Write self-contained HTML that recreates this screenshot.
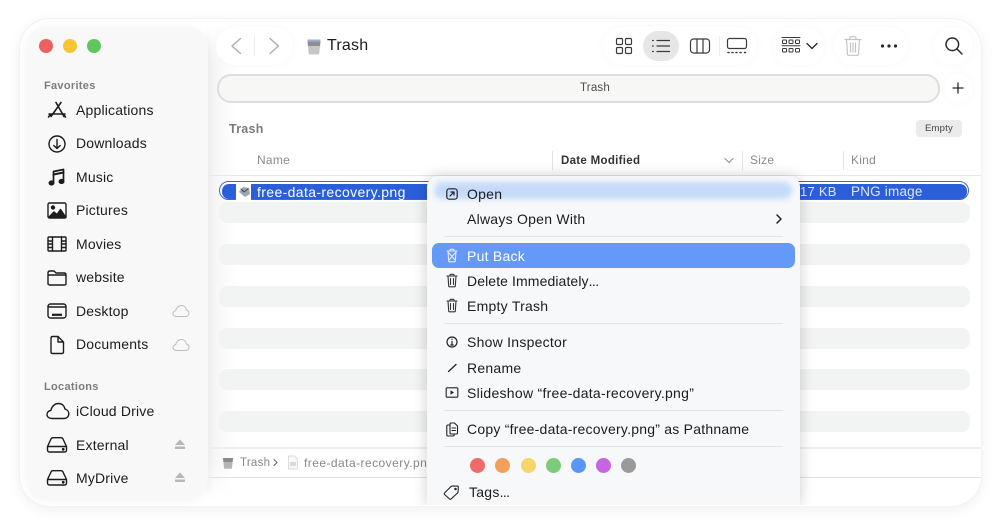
<!DOCTYPE html>
<html>
<head>
<meta charset="utf-8">
<style>
html,body{margin:0;padding:0;background:#fff;}
body{width:1000px;height:525px;position:relative;overflow:hidden;font-family:"Liberation Sans",sans-serif;color:#1c1c1c;}
div,span,svg{position:absolute;}
b.e{position:static;font-weight:normal;letter-spacing:-.6px;}
.t{white-space:nowrap;font-size:14px;line-height:18px;letter-spacing:.25px;}
.s{left:76px;letter-spacing:.18px;}
.h{left:44px;font-size:11px;font-weight:bold;color:#7c7c7c;letter-spacing:.3px;}
.m{left:467px;}
.st{left:219px;width:751px;height:21px;background:#f2f3f3;border-radius:8px;}
.pill{background:#fff;border-radius:19px;box-shadow:0 0 10px rgba(0,0,0,.03);}
.sep{left:444px;width:339px;height:1px;background:#e2e3e4;}
.dot{width:15px;height:15px;border-radius:50%;top:458px;}
svg{fill:none;stroke:#1c1c1c;stroke-width:1.4;stroke-linecap:round;stroke-linejoin:round;}
</style>
</head>
<body>
<div style="left:20px;top:19px;width:961px;height:487px;border-radius:30px;background:#fff;box-shadow:0 0 0 1px #f3f3f3,0 3px 14px rgba(0,0,0,.07);"></div>
<div style="left:206px;top:24px;width:30px;height:476px;background:linear-gradient(90deg,#f2f2f2,#fff);-webkit-mask-image:linear-gradient(180deg,transparent 0,#000 40px,#000 436px,transparent 100%);mask-image:linear-gradient(180deg,transparent 0,#000 40px,#000 436px,transparent 100%);"></div>

<!-- Sidebar -->
<div style="left:27px;top:27px;width:181px;height:471px;border-radius:19px;background:#f8f8f8;box-shadow:0 2px 10px rgba(0,0,0,.05);"></div>
<div style="left:39px;top:39px;width:14px;height:14px;border-radius:50%;background:#ee5f5f;"></div>
<div style="left:63px;top:39px;width:14px;height:14px;border-radius:50%;background:#f6c531;"></div>
<div style="left:87px;top:39px;width:14px;height:14px;border-radius:50%;background:#5fc75e;"></div>

<div class="t h" style="top:77px;">Favorites</div>
<div class="t s" style="top:101px;">Applications</div>
<div class="t s" style="top:134px;">Downloads</div>
<div class="t s" style="top:168px;">Music</div>
<div class="t s" style="top:201px;">Pictures</div>
<div class="t s" style="top:235px;">Movies</div>
<div class="t s" style="top:268px;">website</div>
<div class="t s" style="top:302px;">Desktop</div>
<div class="t s" style="top:335px;">Documents</div>
<div class="t h" style="top:378px;">Locations</div>
<div class="t s" style="top:402px;">iCloud Drive</div>
<div class="t s" style="top:436px;">External</div>
<div class="t s" style="top:469px;">MyDrive</div>

<!-- sidebar icons -->
<svg style="left:46px;top:100px;" width="22" height="20" viewBox="0 0 22 20"><path d="M10 2.500L18 16.500M15 2.500L5 16.500M3 14h16M2.500 17l2-2.500M19.500 17l-2-2.500" stroke-width="1.600"/></svg>
<svg style="left:47px;top:134px;" width="20" height="20" viewBox="0 0 20 20"><circle cx="10" cy="10" r="8"/><path d="M10 5.500v9M6.800 11.500l3.200 3 3.200-3"/></svg>
<svg style="left:47px;top:167px;" width="20" height="20" viewBox="0 0 20 20"><path d="M6.500 16V4.500L16.500 2.500V14" stroke-width="1.700"/><path d="M6.500 7.500l10-2" stroke-width="2"/><ellipse cx="4.500" cy="16" rx="2.300" ry="1.900" fill="#1c1c1c"/><ellipse cx="14.500" cy="14.500" rx="2.300" ry="1.900" fill="#1c1c1c"/></svg>
<svg style="left:47px;top:202px;" width="20" height="18" viewBox="0 0 20 18"><rect x="1" y="1" width="18" height="15" rx="1.500"/><circle cx="6" cy="5.500" r="1.500" fill="#1c1c1c"/><path d="M1.500 15.500L7 10l3 2.500 3.500-5 5.500 8z" fill="#1c1c1c"/></svg>
<svg style="left:47px;top:235px;" width="20" height="18" viewBox="0 0 20 18"><rect x="1" y="2" width="18" height="14" rx="1"/><path d="M5.500 2v14M14.500 2v14M1 6h4.500M1 9h4.500M1 12.500h4.500M14.500 6H19M14.500 9H19M14.500 12.500H19"/></svg>
<svg style="left:47px;top:269px;" width="20" height="18" viewBox="0 0 20 18"><path d="M1 4c0-1 .6-2 2-2h4l2 2h8c1.300 0 2 .8 2 2v8.500c0 1-.7 1.500-1.700 1.500H2.700C1.700 16 1 15.500 1 14.500zM1 6h18"/></svg>
<svg style="left:47px;top:302px;" width="20" height="18" viewBox="0 0 20 18"><rect x="1" y="2" width="18" height="14" rx="2.500"/><path d="M1.500 5h17"/><path d="M5 12.800h10" stroke-width="2.200" stroke-linecap="butt"/></svg>
<svg style="left:49px;top:335px;" width="16" height="20" viewBox="0 0 16 20"><path d="M2 3c0-1 .6-1.500 1.500-1.500H9L14.500 7v10c0 1-.6 1.500-1.500 1.500H3.500C2.600 18.500 2 18 2 17zM9 1.500V7h5.500"/></svg>
<svg style="left:172px;top:304px;stroke:#bdbdbd;stroke-width:1;" width="18" height="14" viewBox="0 0 18 14"><path d="M4.500 12.500C2.500 12.500 1 11.200 1 9.500c0-1.500 1.200-2.700 2.700-2.800C4.300 3.800 6.500 1.500 9.500 1.500c2.800 0 4.500 2 4.800 4.500 1.500.4 2.700 1.700 2.700 3.300 0 1.800-1.300 3.200-3 3.200z"/></svg>
<svg style="left:172px;top:338px;stroke:#bdbdbd;stroke-width:1;" width="18" height="14" viewBox="0 0 18 14"><path d="M4.500 12.500C2.500 12.500 1 11.200 1 9.500c0-1.500 1.200-2.700 2.700-2.800C4.300 3.800 6.500 1.500 9.500 1.500c2.800 0 4.500 2 4.800 4.500 1.500.4 2.700 1.700 2.700 3.300 0 1.800-1.300 3.200-3 3.200z"/></svg>
<svg style="left:46px;top:402px;" width="24" height="18" viewBox="0 0 24 18"><path d="M6 16.500C3 16.500 1 14.800 1 12.500c0-2.200 1.700-3.900 3.900-4C5.700 4.300 8.800 1.500 12.500 1.500c3.700 0 6 2.600 6.500 5.600 2.200.5 3.800 2.400 3.800 4.700 0 2.700-2 4.700-4.800 4.700z"/></svg>
<svg style="left:46px;top:436px;" width="22" height="18" viewBox="0 0 22 18"><path d="M1.500 10.500L5 3c.4-.9 1-1.300 2-1.300h8c1 0 1.600.4 2 1.300l3.500 7.500M1.500 10.500h19v3.500c0 1.300-.9 2-2 2h-15c-1.100 0-2-.7-2-2z"/><circle cx="17.200" cy="13.300" r=".7" fill="#1c1c1c"/></svg>
<svg style="left:46px;top:469px;" width="22" height="18" viewBox="0 0 22 18"><path d="M1.500 10.500L5 3c.4-.9 1-1.300 2-1.300h8c1 0 1.600.4 2 1.300l3.500 7.500M1.500 10.500h19v3.500c0 1.300-.9 2-2 2h-15c-1.100 0-2-.7-2-2z"/><circle cx="17.200" cy="13.300" r=".7" fill="#1c1c1c"/></svg>
<svg style="left:174px;top:439px;stroke:none;" width="12" height="11" viewBox="0 0 12 11"><path d="M6 0.500L11 6H1z" fill="#b8b8b8"/><rect x="1" y="7.500" width="10" height="2.500" fill="#b8b8b8"/></svg>
<svg style="left:174px;top:472px;stroke:none;" width="12" height="11" viewBox="0 0 12 11"><path d="M6 0.500L11 6H1z" fill="#b8b8b8"/><rect x="1" y="7.500" width="10" height="2.500" fill="#b8b8b8"/></svg>

<!-- Toolbar -->
<div class="pill" style="left:216px;top:27px;width:77px;height:38px;"></div>
<svg style="left:228px;top:35px;stroke:#aeaeae;stroke-width:1.500;" width="18" height="22" viewBox="0 0 18 22"><path d="M12.500 3.500L4 11l8.500 7.500"/></svg>
<div style="left:254px;top:36px;width:1px;height:20px;background:#eeeeee;"></div>
<svg style="left:265px;top:35px;stroke:#aeaeae;stroke-width:1.500;" width="18" height="22" viewBox="0 0 18 22"><path d="M5 3.500L13.500 11 5 18.500"/></svg>
<svg style="left:306px;top:38px;stroke:none;" width="16" height="17" viewBox="0 0 16 17"><path d="M1.500 3h13l-1.200 12.500c-.1.700-.5 1-1.200 1H3.900c-.7 0-1.100-.3-1.200-1z" fill="#c6c6c6"/><path d="M1.500 3h13l-.5 5H2z" fill="#8e8e8e"/><rect x="1.500" y="1.500" width="13" height="2.200" fill="#9ab0cc"/></svg>
<div class="t" style="left:327px;top:36px;font-size:16px;line-height:20px;letter-spacing:.2px;">Trash</div>

<div class="pill" style="left:603px;top:27px;width:154px;height:38px;"></div>
<div style="left:643px;top:31px;width:36px;height:30px;border-radius:15px;background:#e6e6e6;"></div>
<svg style="left:615px;top:37px;stroke:#3a3a3a;stroke-width:1.200;" width="18" height="18" viewBox="0 0 18 18"><rect x="1.500" y="1.500" width="6" height="6" rx="1.200"/><rect x="10.500" y="1.500" width="6" height="6" rx="1.200"/><rect x="1.500" y="10.500" width="6" height="6" rx="1.200"/><rect x="10.500" y="10.500" width="6" height="6" rx="1.200"/></svg>
<svg style="left:651px;top:38px;stroke:#3a3a3a;stroke-width:1.200;" width="20" height="16" viewBox="0 0 20 16"><path d="M6 2.500h12.500M6 8h12.500M6 13.500h12.500M1.500 2.500h.8M1.500 8h.8M1.500 13.500h.8"/></svg>
<svg style="left:689px;top:37px;stroke:#3a3a3a;stroke-width:1.200;" width="22" height="18" viewBox="0 0 22 18"><rect x="1.500" y="2" width="19" height="14" rx="3"/><path d="M8 2v14M14 2v14"/></svg>
<div style="left:719px;top:36px;width:1px;height:20px;background:#eeeeee;"></div>
<svg style="left:726px;top:37px;stroke:#3a3a3a;stroke-width:1.200;" width="22" height="18" viewBox="0 0 22 18"><rect x="1.500" y="1.500" width="19" height="10" rx="2"/><path d="M2 15.500h1M6 15.500h1M10 15.500h1M14 15.500h1M18.500 15.500h1" stroke-width="1.500"/></svg>

<div class="pill" style="left:774px;top:27px;width:50px;height:38px;"></div>
<svg style="left:781px;top:36px;stroke:#3a3a3a;stroke-width:1;" width="20" height="20" viewBox="0 0 20 20"><path d="M1 1.500h18M1 9.800h18"/><rect x="1.500" y="4" width="4" height="3.500" rx=".6"/><rect x="8" y="4" width="4" height="3.500" rx=".6"/><rect x="14.500" y="4" width="4" height="3.500" rx=".6"/><rect x="1.500" y="12.500" width="4" height="3.500" rx=".6"/><rect x="8" y="12.500" width="4" height="3.500" rx=".6"/><rect x="14.500" y="12.500" width="4" height="3.500" rx=".6"/></svg>
<svg style="left:805px;top:41px;stroke:#2a2a2a;stroke-width:1.400;" width="14" height="10" viewBox="0 0 14 10"><path d="M2 2.500l5 5 5-5"/></svg>

<div class="pill" style="left:834px;top:27px;width:73px;height:38px;"></div>
<svg style="left:843px;top:35px;stroke:#c4c4c4;stroke-width:1.200;" width="20" height="22" viewBox="0 0 20 22"><path d="M2 4.500h16M7 4.500V3c0-.8.500-1.300 1.300-1.300h3.400c.8 0 1.300.5 1.300 1.300v1.500M3.500 4.500l1 14.500c0 .8.600 1.300 1.300 1.300h8.400c.7 0 1.300-.5 1.300-1.300l1-14.500M7.500 8v9M10 8v9M12.500 8v9"/></svg>
<svg style="left:880px;top:43px;stroke:none;" width="18" height="6" viewBox="0 0 18 6"><circle cx="2.500" cy="3" r="1.600" fill="#2a2a2a"/><circle cx="9" cy="3" r="1.600" fill="#2a2a2a"/><circle cx="15.500" cy="3" r="1.600" fill="#2a2a2a"/></svg>

<div class="pill" style="left:934px;top:27px;width:39px;height:38px;"></div>
<svg style="left:944px;top:36px;stroke:#2a2a2a;stroke-width:1.500;" width="20" height="20" viewBox="0 0 20 20"><circle cx="8.300" cy="8.300" r="6.300"/><path d="M13 13l5 5"/></svg>

<!-- Tab bar -->
<div style="left:217px;top:74px;width:719px;height:25px;border:2px solid #dededc;border-radius:14px;background:#f7f7f5;"></div>
<div class="t" style="left:580px;top:79px;font-size:11.500px;line-height:18px;color:#4d4d4d;letter-spacing:.2px;">Trash</div>
<div class="pill" style="left:944px;top:74px;width:29px;height:29px;border-radius:50%;"></div>
<svg style="left:951px;top:81px;stroke:#2a2a2a;stroke-width:1.300;" width="14" height="14" viewBox="0 0 14 14"><path d="M7 2v10M2 7h10"/></svg>

<!-- Content header -->
<div class="t" style="left:229px;top:120px;font-size:12.500px;font-weight:bold;color:#7b7b7b;letter-spacing:.25px;">Trash</div>
<div style="left:916px;top:120px;width:46px;height:17px;border-radius:4px;background:#ebebeb;"></div>
<div class="t" style="left:925px;top:120px;font-size:9.500px;line-height:17px;color:#444;letter-spacing:.2px;">Empty</div>

<div class="t" style="left:257px;top:151px;font-size:12px;color:#8a8a8a;">Name</div>
<div class="t" style="left:561px;top:152px;font-size:11.500px;font-weight:bold;color:#333;letter-spacing:.3px;">Date Modified</div>
<svg style="left:723px;top:156px;stroke:#8a8a8a;stroke-width:1;" width="12" height="9" viewBox="0 0 12 9"><path d="M2 2.500l4 4 4-4"/></svg>
<div class="t" style="left:750px;top:151px;font-size:12px;color:#8a8a8a;">Size</div>
<div class="t" style="left:851px;top:151px;font-size:12px;color:#8a8a8a;">Kind</div>
<div style="left:552px;top:151px;width:1px;height:19px;background:#e4e4e4;"></div>
<div style="left:742px;top:151px;width:1px;height:19px;background:#e4e4e4;"></div>
<div style="left:843px;top:151px;width:1px;height:19px;background:#e4e4e4;"></div>
<div style="left:209px;top:175px;width:772px;height:1px;background:#e8e8e8;"></div>

<!-- Rows -->
<div class="st" style="top:202px;"></div>
<div class="st" style="top:244px;"></div>
<div class="st" style="top:286px;"></div>
<div class="st" style="top:328px;"></div>
<div class="st" style="top:369px;"></div>
<div class="st" style="top:411px;"></div>

<!-- Selected row -->
<div style="left:219px;top:181px;width:748px;height:17px;border:1.500px solid #3d68d8;border-radius:10px;background:#fff;"></div>
<div style="left:222px;top:184px;width:745px;height:15px;border-radius:7px;background:#2b5fd9;"></div>
<div style="left:236px;top:183px;width:15px;height:17px;background:#fff;"></div>
<svg style="left:237px;top:184px;stroke:none;" width="15" height="15" viewBox="0 0 15 15"><path d="M2 8l4-5 6 1 1 6-5 3z" fill="#9aa6b8"/><path d="M4 5l3 3 4-3" stroke="#444" stroke-width="1"/></svg>
<div class="t" style="left:257px;top:183px;color:#fff;font-size:14px;letter-spacing:.37px;">free-data-recovery.png</div>
<div class="t" style="left:800px;top:183px;color:#dfe7fb;font-size:13px;">17 KB</div>
<div class="t" style="left:851px;top:183px;color:#dfe7fb;font-size:13.500px;letter-spacing:.2px;">PNG image</div>

<!-- Status bar -->
<div style="left:209px;top:447px;width:772px;height:2px;background:#eeeeee;"></div>
<div style="left:209px;top:477px;width:772px;height:1px;background:#e2e2e2;"></div>
<svg style="left:222px;top:456px;stroke:none;" width="12" height="13" viewBox="0 0 12 13"><path d="M1 2h10l-1 10c0 .5-.4.8-.9.8H2.900c-.5 0-.9-.3-.9-.8z" fill="#b5b5b5"/><path d="M1 2h10l-.4 4H1.400z" fill="#8a8a8a"/></svg>
<div class="t" style="left:240px;top:454px;font-size:11.500px;color:#888;">Trash</div>
<svg style="left:272px;top:458px;stroke:#666;stroke-width:1;" width="7" height="9" viewBox="0 0 7 9"><path d="M2 1.500l3 3-3 3"/></svg>
<svg style="left:287px;top:455px;stroke:#dcdcdc;stroke-width:1;" width="12" height="15" viewBox="0 0 12 15"><path d="M1.500 1h6l3 3v10h-9z" fill="#f8f8f8"/><path d="M3.500 8h5M3.500 10h5" stroke="#bbb"/></svg>
<div class="t" style="left:304px;top:454px;font-size:12px;color:#888;width:123px;overflow:hidden;letter-spacing:.45px;">free-data-recovery.png</div>

<!-- Context menu -->
<div style="left:427px;top:176px;width:373px;height:329px;border-radius:11px 11px 0 0;background:#f7f8fa;box-shadow:0 0 14px rgba(0,0,0,.2);clip-path:inset(-30px -30px 0 -30px);"></div>
<div style="left:434px;top:182px;width:358px;height:17px;border-radius:9px;background:#c3daf9;filter:blur(3px);"></div>

<svg style="left:445px;top:187px;stroke:#222;stroke-width:1.200;" width="14" height="14" viewBox="0 0 14 14"><rect x="1.800" y="1.800" width="10.400" height="10.400" rx="2.500"/><path d="M5 9l4-4M6 5h3v3"/></svg>
<div class="t m" style="top:185px;">Open</div>
<div class="t m" style="top:210px;">Always Open With</div>
<svg style="left:774px;top:213px;stroke:#222;stroke-width:1.500;" width="10" height="12" viewBox="0 0 10 12"><path d="M3 2l4 4-4 4"/></svg>
<div class="sep" style="top:236px;"></div>

<div style="left:432px;top:243px;width:363px;height:25px;border-radius:7px;background:#6499f8;"></div>
<svg style="left:445px;top:248px;stroke:#e4edfe;stroke-width:1.100;" width="14" height="15" viewBox="0 0 14 15"><path d="M2 3h10M5 3V2c0-.4.300-.7.700-.7h2.600c.4 0 .7.3.7.7v1M3 3l.7 10c0 .5.400.8.800.8h5c.4 0 .8-.3.800-.8L11 3M4 5l6 7M10 5l-6 7"/></svg>
<div class="t m" style="top:247px;color:#fff;">Put Back</div>
<svg style="left:445px;top:273px;stroke:#333;stroke-width:1.100;" width="14" height="15" viewBox="0 0 14 15"><path d="M2 3h10M5 3V2c0-.4.300-.7.700-.7h2.600c.4 0 .7.3.7.7v1M3 3l.7 10c0 .5.400.8.800.8h5c.4 0 .8-.3.800-.8L11 3M5.500 5.500v6M8.500 5.500v6"/></svg>
<div class="t m" style="top:272px;letter-spacing:.1px;">Delete Immediately<b class="e">...</b></div>
<svg style="left:445px;top:298px;stroke:#333;stroke-width:1.100;" width="14" height="15" viewBox="0 0 14 15"><path d="M2 3h10M5 3V2c0-.4.300-.7.700-.7h2.600c.4 0 .7.3.7.7v1M3 3l.7 10c0 .5.400.8.800.8h5c.4 0 .8-.3.800-.8L11 3M5.500 5.500v6M8.500 5.500v6"/></svg>
<div class="t m" style="top:297px;">Empty Trash</div>
<div class="sep" style="top:323px;"></div>

<svg style="left:445px;top:335px;stroke:#222;stroke-width:1.200;" width="14" height="14" viewBox="0 0 14 14"><circle cx="7" cy="7" r="5"/><path d="M7 6.500V10M5.800 10h2.400M7 4.200v.3"/></svg>
<div class="t m" style="top:333px;">Show Inspector</div>
<svg style="left:446px;top:361px;stroke:#222;stroke-width:1.300;" width="13" height="13" viewBox="0 0 13 13"><path d="M2.500 10.500l7.500-7"/></svg>
<div class="t m" style="top:359px;">Rename</div>
<svg style="left:445px;top:386px;stroke:#222;stroke-width:1.100;" width="14" height="13" viewBox="0 0 14 13"><rect x="1.200" y="1.800" width="11.600" height="9.400" rx="1"/><path d="M5.500 4.300v4.400l3.500-2.200z" fill="#222" stroke="none"/></svg>
<div class="t m" style="top:384px;letter-spacing:.28px;">Slideshow “free-data-recovery.png”</div>
<div class="sep" style="top:410px;"></div>

<svg style="left:445px;top:422px;stroke:#222;stroke-width:1.100;" width="14" height="15" viewBox="0 0 14 15"><path d="M5 3H3c-.8 0-1.200.4-1.200 1.200v8.600c0 .8.400 1.200 1.200 1.200h5c.8 0 1.200-.4 1.200-1.200V12M5 2c0-.6.400-1 1-1h3.500L12.500 4v7c0 .6-.4 1-1 1H6c-.6 0-1-.4-1-1zM7 6h3.500M7 8.500h3.500"/></svg>
<div class="t m" style="top:420px;letter-spacing:.23px;">Copy “free-data-recovery.png” as Pathname</div>
<div class="sep" style="top:446px;"></div>

<div class="dot" style="left:470px;background:#ee6b6b;"></div>
<div class="dot" style="left:495px;background:#f3a05b;"></div>
<div class="dot" style="left:521px;background:#f8d568;"></div>
<div class="dot" style="left:546px;background:#7bcb7b;"></div>
<div class="dot" style="left:571px;background:#5a96f7;"></div>
<div class="dot" style="left:596px;background:#c566e0;"></div>
<div class="dot" style="left:621px;background:#9a9a9a;"></div>

<svg style="left:443px;top:484px;stroke:#222;stroke-width:1.100;" width="17" height="16" viewBox="0 0 17 16"><path d="M1.500 9l6.500-6.500c.3-.3.600-.4 1-.4h5.500c.5 0 .8.300.8.800l-.2 5c0 .4-.1.700-.4 1L8 15c-.4.400-1 .4-1.400 0l-5.100-4.600c-.4-.4-.4-1 0-1.400z"/><circle cx="12.500" cy="5" r=".7"/></svg>
<div class="t m" style="left:469px;top:483px;">Tags<b class="e">...</b></div>
</body>
</html>
